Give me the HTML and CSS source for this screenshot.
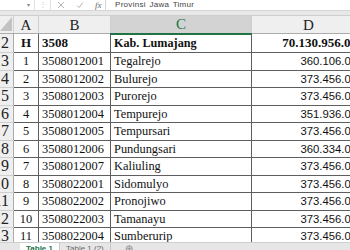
FILE: index.html
```html
<!DOCTYPE html>
<html lang="id">
<head>
    <meta charset="UTF-8">
    <meta name="viewport" content="width=device-width, initial-scale=1.0">
    <title>Table 1</title>
    <link rel="stylesheet" href="styles.css">
</head>
<body>
    <div class="formula-bar">
        <div class="name-box"><span class="caret">&#9662;</span></div>
        <div class="grip">&#8942;</div>
        <div class="fx-buttons">
            <svg class="ico" width="8" height="8" viewBox="0 0 8 8"><path d="M1 1L7 7M7 1L1 7" stroke="#b4b4b4" stroke-width="1" fill="none"/></svg>
            <svg class="ico" width="8" height="8" viewBox="0 0 8 8"><path d="M1 4.5L3 6.5L7 1.5" stroke="#b4b4b4" stroke-width="1" fill="none"/></svg>
            <span class="fx">fx</span>
        </div>
        <div class="formula">Provinsi Jawa Timur</div>
    </div>
    <div class="band"></div>

    <div class="sheet-wrap">
        <table class="sheet">
            <colgroup>
                <col class="c-rh">
                <col class="c-a">
                <col class="c-b">
                <col class="c-c">
                <col class="c-d">
            </colgroup>
            <thead>
                <tr>
                    <th class="corner"></th>
                    <th>A</th>
                    <th>B</th>
                    <th class="selected">C</th>
                    <th>D</th>
                </tr>
            </thead>
            <tbody>
                <tr class="head-row">
                    <td class="rh">2</td>
                    <td class="no">H</td>
                    <td class="code">3508</td>
                    <td class="name">Kab. Lumajang</td>
                    <td class="amount">70.130.956.00</td>
                </tr>
                <tr>
                    <td class="rh">3</td><td class="no">1</td><td class="code">3508012001</td><td class="name">Tegalrejo</td><td class="amount">360.106.00</td>
                </tr>
                <tr>
                    <td class="rh">4</td><td class="no">2</td><td class="code">3508012002</td><td class="name">Bulurejo</td><td class="amount">373.456.00</td>
                </tr>
                <tr>
                    <td class="rh">5</td><td class="no">3</td><td class="code">3508012003</td><td class="name">Purorejo</td><td class="amount">373.456.00</td>
                </tr>
                <tr>
                    <td class="rh">6</td><td class="no">4</td><td class="code">3508012004</td><td class="name">Tempurejo</td><td class="amount">351.936.00</td>
                </tr>
                <tr>
                    <td class="rh">7</td><td class="no">5</td><td class="code">3508012005</td><td class="name">Tempursari</td><td class="amount">373.456.00</td>
                </tr>
                <tr>
                    <td class="rh">8</td><td class="no">6</td><td class="code">3508012006</td><td class="name">Pundungsari</td><td class="amount">360.334.00</td>
                </tr>
                <tr>
                    <td class="rh">9</td><td class="no">7</td><td class="code">3508012007</td><td class="name">Kaliuling</td><td class="amount">373.456.00</td>
                </tr>
                <tr>
                    <td class="rh">10</td><td class="no">8</td><td class="code">3508022001</td><td class="name">Sidomulyo</td><td class="amount">373.456.00</td>
                </tr>
                <tr>
                    <td class="rh">11</td><td class="no">9</td><td class="code">3508022002</td><td class="name">Pronojiwo</td><td class="amount">373.456.00</td>
                </tr>
                <tr>
                    <td class="rh">12</td><td class="no">10</td><td class="code">3508022003</td><td class="name">Tamanayu</td><td class="amount">373.456.00</td>
                </tr>
                <tr>
                    <td class="rh">13</td><td class="no">11</td><td class="code">3508022004</td><td class="name">Sumberurip</td><td class="amount">373.456.00</td>
                </tr>
            </tbody>
        </table>
    </div>

    <div class="tabs">
        <div class="tab-spacer"></div>
        <div class="tab active">Table 1</div>
        <div class="tab">Table 1 (2)</div>
        <div class="tab add">&#8853;</div>
    </div>
</body>
</html>
```

FILE: styles.css
```css
html, body {
    margin: 0;
    height: 100%;
    overflow: hidden;
}

body {
    background-color: #e8e8e8;
    font-family: 'Liberation Serif', serif;
    color: #111;
    display: flex;
    flex-direction: column;
}

/* formula bar */
.formula-bar {
    display: flex;
    height: 10px;
    background-color: #fff;
    border-bottom: 1px solid #d6d6d6;
    font-family: 'Liberation Sans', sans-serif;
    font-size: 8px;
    line-height: 10px;
    color: #777;
    flex-shrink: 0;
}

.name-box {
    width: 35px;
    text-align: right;
    box-sizing: border-box;
    padding-right: 4px;
    border-right: 1px solid #e2e2e2;
}

.caret {
    font-size: 6px;
    color: #888;
}

.grip {
    width: 15px;
    text-align: center;
    color: #c4c4c4;
}

.fx-buttons {
    width: 56px;
    display: flex;
    align-items: center;
    gap: 11px;
    box-sizing: border-box;
    padding-left: 6px;
    border-left: 1px solid #e2e2e2;
    border-right: 1px solid #d6d6d6;
}

.fx {
    font-family: 'Liberation Serif', serif;
    font-style: italic;
    font-size: 9px;
    color: #666;
}

.formula {
    flex: 1;
    padding-left: 9px;
    color: #444;
    letter-spacing: 0.3px;
    word-spacing: 1px;
}

.band {
    height: 4px;
    flex-shrink: 0;
}

/* sheet grid */
.sheet-wrap {
    flex: 1;
    min-height: 0;
    overflow: hidden;
}

.sheet {
    border-collapse: collapse;
    table-layout: fixed;
    width: 377px;
    margin-left: -12px;
    background-color: #fff;
}

.c-rh { width: 25px; }
.c-a { width: 25px; }
.c-b { width: 72px; }
.c-c { width: 141px; }
.c-d { width: 114px; }

thead tr {
    height: 18px;
}

th {
    background-color: #efefef;
    border: 1px solid #cfcfcf;
    border-bottom-color: #ababab;
    font-weight: normal;
    font-size: 15px;
    line-height: 16px;
    color: #222;
    padding: 0;
}

th.selected {
    background-color: #d3d3d3;
    color: #217346;
    border-bottom: 2px solid #217346;
}

th.corner {
    position: relative;
}

th.corner::after {
    content: '';
    position: absolute;
    right: 1px;
    bottom: 2px;
    border-style: solid;
    border-width: 0 0 14px 12px;
    border-color: transparent transparent #c2c2c2 transparent;
}

tbody tr {
    height: 17.5px;
}

tbody tr.head-row {
    height: 19px;
}

td {
    border: 1px solid #5e5e5e;
    padding: 0 3px;
    font-size: 12.4px;
    line-height: 14px;
    white-space: nowrap;
    overflow: hidden;
}

td.rh {
    background-color: #efefef;
    border: 1px solid #cfcfcf;
    border-right-color: #ababab;
    text-align: right;
    padding: 0 4px 0 0;
    font-size: 16px;
    color: #222;
}

td.no {
    text-align: center;
    padding: 0;
}

td.amount {
    text-align: right;
    padding-right: 8px;
    font-family: 'Liberation Sans', sans-serif;
    font-size: 11.3px;
}

.head-row td {
    font-weight: bold;
    font-size: 13px;
}

.head-row td.name {
    font-size: 12.2px;
}

.head-row td.rh {
    font-weight: normal;
    font-size: 16px;
}

.head-row td.amount {
    font-family: 'Liberation Serif', serif;
    font-size: 13px;
}

/* sheet tabs */
.tabs {
    height: 7px;
    flex-shrink: 0;
    display: flex;
    align-items: flex-start;
    background-color: #e6e6e6;
    border-top: 1px solid #cfcfcf;
    font-family: 'Liberation Sans', sans-serif;
    font-size: 8px;
    line-height: 10px;
    color: #666;
    overflow: hidden;
}

.tab-spacer {
    width: 20px;
}

.tab {
    padding: 1px 6px 0;
    border-right: 1px solid #c8c8c8;
}

.tab.active {
    background-color: #fff;
    color: #217346;
    font-weight: bold;
}

.tab.add {
    border: none;
    padding-left: 14px;
    color: #888;
    font-size: 10px;
}
```
